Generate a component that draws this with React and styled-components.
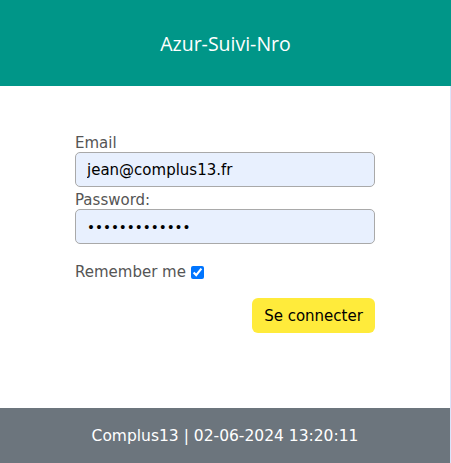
import React from 'react';
import styled, { createGlobalStyle } from 'styled-components';

const GlobalStyle = createGlobalStyle`
    html, body {
        margin: 0;
        padding: 0;
        background: #dbe4fb;
    }
    * { box-sizing: border-box; }
`

const Page = styled.div`
    width: 451px;
    height: 463px;
    display: flex;
    flex-direction: column;
`

const Header = styled.header`
    height: 86px;
    background-color: #009688;
    color: white;
    display: flex;
    align-items: center;
    justify-content: center;
    font-family: 'Open Sans', sans-serif;
    font-size: 19.5px;
`

const Main = styled.main`
    flex: 1;
    width: 450px;
    background: white;
    padding: 48px 75px 0 75px;
    font-family: 'DejaVu Sans', sans-serif;
`

const Label = styled.label`
    display: block;
    color: #555;
    font-size: 15px;
    line-height: 18px;
`

const Input = styled.input`
    display: block;
    width: 300px;
    height: 35px;
    margin: ${props => props.$last ? '0' : '0 0 4px 0'};
    padding: 0 11px;
    background: #e8f0fe;
    border: 1px solid #a9a9a9;
    border-radius: 5px;
    font-family: 'DejaVu Sans', sans-serif;
    font-size: ${props => props.type === 'password' ? '13.5px' : '15px'};
    color: black;
    outline: none;
`

const Remember = styled.div`
    margin-top: 19px;
    display: flex;
    align-items: center;
    gap: 5px;
    color: #555;
    font-size: 15px;
    input {
        margin: 0;
        width: 13px;
        height: 13px;
    }
`

const Actions = styled.div`
    display: flex;
    justify-content: flex-end;
    margin-top: 17px;
`

const Button = styled.button`
    width: 123px;
    height: 35px;
    border: none;
    border-radius: 6px;
    background-color: #ffeb3b;
    color: black;
    font-family: 'DejaVu Sans', sans-serif;
    font-size: 15px;
    cursor: pointer;
`

const Footer = styled.footer`
    height: 55px;
    width: 450px;
    background-color: #6c757d;
    color: white;
    display: flex;
    align-items: center;
    justify-content: center;
    font-family: 'DejaVu Sans', sans-serif;
    font-size: 15.5px;
`

export default function App() {
    return (
        <Page>
            <GlobalStyle />
            <Header>Azur-Suivi-Nro</Header>
            <Main>
                <Label>Email</Label>
                <Input type="email" defaultValue="jean@complus13.fr" />
                <Label>Password:</Label>
                <Input type="password" defaultValue="complus132024" $last />
                <Remember>
                    Remember me
                    <input type="checkbox" defaultChecked />
                </Remember>
                <Actions>
                    <Button>Se connecter</Button>
                </Actions>
            </Main>
            <Footer>Complus13 | 02-06-2024 13:20:11</Footer>
        </Page>
    );
}
